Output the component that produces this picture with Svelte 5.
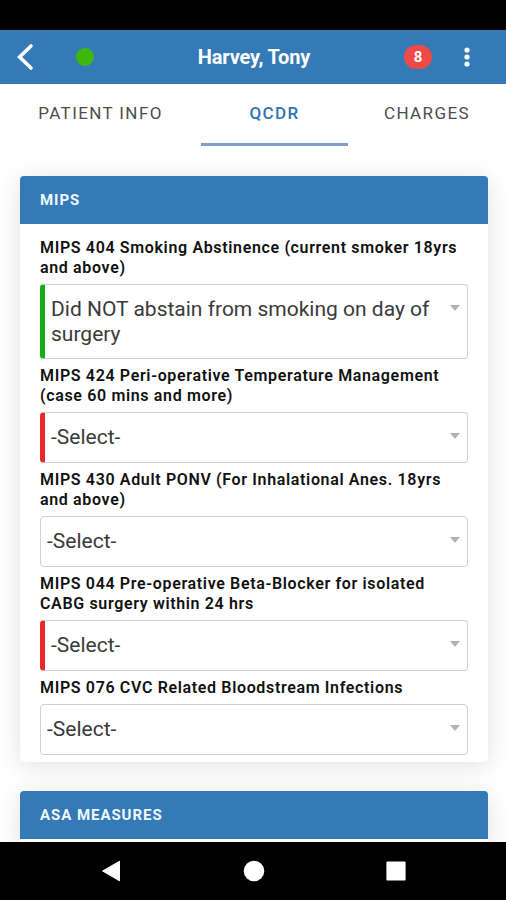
<script lang="ts">
	type Measure = {
		label: string;
		value: string;
		status?: 'done' | 'required';
	};

	const tabs = ['Patient Info', 'QCDR', 'Charges'];
	let activeTab = $state('QCDR');

	const measures: Measure[] = [
		{
			label: 'MIPS 404 Smoking Abstinence (current smoker 18yrs and above)',
			value: 'Did NOT abstain from smoking on day of surgery',
			status: 'done'
		},
		{
			label: 'MIPS 424 Peri-operative Temperature Management (case 60 mins and more)',
			value: '-Select-',
			status: 'required'
		},
		{
			label: 'MIPS 430 Adult PONV (For Inhalational Anes. 18yrs and above)',
			value: '-Select-'
		},
		{
			label: 'MIPS 044 Pre-operative Beta-Blocker for isolated CABG surgery within 24 hrs',
			value: '-Select-',
			status: 'required'
		},
		{ label: 'MIPS 076 CVC Related Bloodstream Infections', value: '-Select-' }
	];
</script>

<div class="screen">
	<div class="status-bar"></div>

	<header class="toolbar">
		<button class="back" aria-label="Back">
			<svg width="18" height="28" viewBox="0 0 18 28">
				<path d="M15 3 3.6 14 15 25" fill="none" stroke="#fff" stroke-width="3.6" stroke-linecap="round" stroke-linejoin="miter" />
			</svg>
		</button>
		<span class="online"></span>
		<h1>Harvey, Tony</h1>
		<span class="badge">8</span>
		<button class="more" aria-label="More">
			<svg width="6" height="20" viewBox="0 0 6 20">
				<circle cx="3" cy="3" r="2.6" fill="#fff" />
				<circle cx="3" cy="10" r="2.6" fill="#fff" />
				<circle cx="3" cy="17" r="2.6" fill="#fff" />
			</svg>
		</button>
	</header>

	<nav class="tabs">
		{#each tabs as tab}
			<button class="tab" class:active={tab === activeTab} onclick={() => (activeTab = tab)}>
				<span>{tab}</span>
			</button>
		{/each}
	</nav>

	<main class="content">
		<section class="card">
			<h2>MIPS</h2>
			<div class="card-body">
				{#each measures as measure}
					<div class="label">{measure.label}</div>
					<div
						class="select"
						class:done={measure.status === 'done'}
						class:required={measure.status === 'required'}
					>
						<span class="value">{measure.value}</span>
						<span class="caret"></span>
					</div>
				{/each}
			</div>
		</section>

		<section class="card">
			<h2>ASA Measures</h2>
			<div class="card-body"></div>
		</section>
	</main>

	<footer class="nav-bar">
		<svg width="20" height="22" viewBox="0 0 20 22">
			<path d="M1.6 11 18.5 1.2V20.8Z" fill="#fff" stroke="#fff" stroke-linejoin="round" />
		</svg>
		<svg width="22" height="22" viewBox="0 0 22 22">
			<circle cx="11" cy="11" r="10.3" fill="#fff" />
		</svg>
		<svg width="20" height="22" viewBox="0 0 20 22">
			<rect x="0.4" y="1.4" width="19.2" height="19.2" rx="1" fill="#fff" />
		</svg>
	</footer>
</div>

<style>
	:global(body) {
		margin: 0;
	}

	.screen {
		display: flex;
		flex-direction: column;
		width: 506px;
		height: 900px;
		overflow: hidden;
		background: #fff;
		font-family: Roboto, 'Liberation Sans', sans-serif;
		color: #111;
	}

	button {
		padding: 0;
		border: none;
		background: none;
		font: inherit;
		color: inherit;
	}

	.status-bar {
		flex: 0 0 29.5px;
		background: #000;
	}

	.toolbar {
		display: grid;
		grid-template-columns: 76px 18px 1fr 28px 70px;
		align-items: center;
		flex: 0 0 54.5px;
		box-sizing: border-box;
		padding-right: 4px;
		background: #337ab7;
	}

	.back {
		display: flex;
		padding-left: 16px;
	}

	.online {
		width: 18px;
		height: 18px;
		border-radius: 50%;
		background: #3db80a;
	}

	h1 {
		margin: 0 0 0 10px;
		font-size: 20px;
		font-weight: 700;
		line-height: 28px;
		letter-spacing: -0.15px;
		text-align: center;
		color: #fff;
	}

	.badge {
		width: 28px;
		height: 24px;
		border-radius: 12px;
		background: #ef4a48;
		font-size: 15px;
		font-weight: 700;
		line-height: 24px;
		text-align: center;
		color: #fff;
	}

	.more {
		display: flex;
		justify-content: center;
	}

	.tabs {
		display: grid;
		grid-template-columns: 201px 147px 158px;
		flex: 0 0 62px;
	}

	.tab {
		display: flex;
		justify-content: center;
		box-sizing: border-box;
		padding-top: 19px;
		border-bottom: 3px solid transparent;
		font-size: 17px;
		line-height: 20px;
		letter-spacing: 1.4px;
		text-transform: uppercase;
		color: #4c4c4c;
	}

	.tab.active {
		border-bottom-color: #7f9fca;
		font-weight: 500;
		color: #2f74b3;
	}

	.content {
		flex: 1;
		min-height: 0;
		padding: 30px 18px 0 20px;
		overflow: hidden;
	}

	.card {
		margin-bottom: 29.5px;
		border-radius: 5px;
		background: #fff;
		box-shadow: 0 4px 24px rgba(0, 0, 0, 0.12);
	}

	h2 {
		margin: 0;
		padding-left: 20px;
		border-radius: 4px 4px 0 0;
		background: #337ab7;
		font-size: 15px;
		font-weight: 700;
		line-height: 48px;
		letter-spacing: 0.95px;
		text-transform: uppercase;
		color: #f1f7fd;
	}

	.card-body {
		padding: 7px 20px 6.5px;
	}

	.label {
		padding: 7px 0 6px;
		font-size: 16px;
		font-weight: 600;
		line-height: 20px;
		letter-spacing: 0.65px;
	}

	.select {
		display: flex;
		align-items: flex-start;
		justify-content: space-between;
		box-sizing: border-box;
		min-height: 51px;
		padding: 12px 7px 12px 6px;
		border: 1.5px solid #d0d0d0;
		border-radius: 4px;
	}

	.select.done {
		border-left: 5px solid #14ad14;
	}

	.select.required {
		border-left: 5px solid #ed2626;
	}

	.value {
		font-size: 21px;
		line-height: 24.5px;
		color: #3a3a3a;
	}

	.caret {
		flex: none;
		margin-top: 8px;
		border: 5.5px solid transparent;
		border-top: 6px solid #b2b2b2;
		border-bottom: 0;
	}

	.nav-bar {
		display: flex;
		align-items: center;
		justify-content: space-between;
		flex: 0 0 58.5px;
		box-sizing: border-box;
		padding: 0 100px 0 101px;
		background: #000;
	}
</style>
